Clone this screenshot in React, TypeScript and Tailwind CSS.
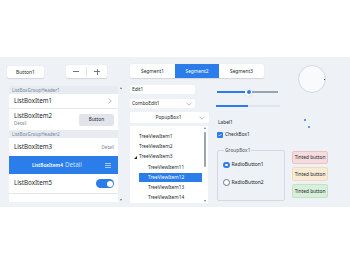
import React from "react";

const blue = "bg-[#2b7de9]";

function Chevron({ className = "" }: { className?: string }) {
  return (
    <svg width="6" height="4" viewBox="0 0 6 4" className={className}>
      <path d="M0.5 0.8 L3 3.2 L5.5 0.8" fill="none" stroke="#9aa4b1" strokeWidth="0.7" />
    </svg>
  );
}

function ListBox() {
  return (
    <div className="ml-[2px] mt-[8px] flex h-[116px] w-[115px] overflow-hidden">
      <div className="flex w-[109px] flex-col bg-white">
        <div className="flex h-[8px] items-center bg-[#e8ecf1] pl-[3px] text-[4.6px] text-[#6f86a3]">ListBoxGroupHeader1</div>
        <div className="flex h-[15px] items-center justify-between border-b border-[#e3e7ec] pl-[5px] pr-[6px] text-[6.2px] text-[#22272e]">
          <span>ListBoxItem1</span>
          <svg width="4" height="6" viewBox="0 0 4 6">
            <path d="M0.8 0.5 L3.2 3 L0.8 5.5" fill="none" stroke="#8b95a3" strokeWidth="0.7" />
          </svg>
        </div>
        <div className="flex h-[21px] items-center justify-between pl-[5px] pr-[4px]">
          <div className="flex flex-col leading-none">
            <span className="text-[6.2px] text-[#22272e]">ListBoxItem2</span>
            <span className="mt-[2px] text-[4.6px] text-[#7c8796]">Detail</span>
          </div>
          <div className="flex h-[12px] w-[35px] items-center justify-center rounded-[2px] bg-[#e1e5eb] text-[4.8px] text-[#22272e]">Button</div>
        </div>
        <div className="flex h-[8px] items-center bg-[#e8ecf1] pl-[3px] text-[4.6px] text-[#6f86a3]">ListBoxGroupHeader2</div>
        <div className="flex h-[18px] items-center justify-between pl-[5px] pr-[4px]">
          <span className="text-[6.2px] text-[#22272e]">ListBoxItem3</span>
          <span className="text-[4.6px] text-[#7c8796]">Detail</span>
        </div>
        <div className={`flex h-[18px] items-center ${blue} pl-[23px] pr-[4px]`}>
          <span className="text-[4.8px] font-semibold text-white">ListBoxItem4</span>
          <span className="ml-[2px] text-[6.2px] text-[#cfe2fb]">Detail</span>
          <svg width="6" height="5" viewBox="0 0 6 5" className="ml-auto mr-[3px]">
            <path d="M0 0.5 H6 M0 2.5 H6 M0 4.5 H6" stroke="white" strokeWidth="0.6" />
          </svg>
        </div>
        <div className="flex h-[20px] items-center justify-between border-b border-[#e3e7ec] pl-[5px] pr-[4px]">
          <span className="text-[6.2px] text-[#22272e]">ListBoxItem5</span>
          <div className={`flex h-[9px] w-[18px] items-center justify-end rounded-full ${blue} pr-[1.5px]`}>
            <div className="h-[6px] w-[6px] rounded-full bg-white" />
          </div>
        </div>
        <div className="h-[8px] bg-white" />
      </div>
      <div className="flex w-[6px] flex-col items-center justify-between bg-[#eef1f5] py-[1px]">
        <div className="h-0 w-0 border-x-[1.5px] border-b-[2px] border-x-transparent border-b-[#6e7885]" />
        <div className="h-0 w-0 border-x-[1.5px] border-t-[2px] border-x-transparent border-t-[#6e7885]" />
      </div>
    </div>
  );
}

function Tree() {
  const items: [string, number, boolean?][] = [
    ["TreeViewItem1", 9],
    ["TreeViewItem2", 9],
    ["TreeViewItem3", 9],
    ["TreeViewItem11", 18],
    ["TreeViewItem12", 18, true],
    ["TreeViewItem13", 18],
    ["TreeViewItem14", 18],
  ];
  return (
    <div className="mt-[3px] flex h-[77px] w-[78px] overflow-hidden rounded-[1px] bg-white">
      <div className="flex flex-1 flex-col pt-[5px]">
        {items.map(([t, ind, sel], i) => (
          <div key={t} className="relative flex h-[10.5px] items-center" style={{ paddingLeft: ind }}>
            {i === 2 && (
              <svg width="3" height="3" viewBox="0 0 3 3" className="absolute left-[4px] top-[4px]">
                <path d="M3 0 V3 H0 Z" fill="#222" />
              </svg>
            )}
            {sel ? (
              <div className={`-ml-[9px] flex h-[9.5px] w-[63px] items-center ${blue} pl-[9px] text-[4.8px] text-white`}>{t}</div>
            ) : (
              <span className="text-[4.8px] text-[#22272e]">{t}</span>
            )}
          </div>
        ))}
      </div>
      <div className="flex w-[6px] flex-col items-center justify-between py-[1px]">
        <div className="h-0 w-0 border-x-[1.5px] border-b-[2px] border-x-transparent border-b-[#6e7885]" />
        <div className="mb-auto mt-[3px] h-[35px] w-[1.5px] rounded bg-[#9aa3ae]" />
        <div className="h-0 w-0 border-x-[1.5px] border-t-[2px] border-x-transparent border-t-[#6e7885]" />
      </div>
    </div>
  );
}

export default function App() {
  return (
    <div className="h-[265px] w-[350px] bg-white font-['Noto_Sans',sans-serif] leading-none">
      <div className="h-[57px]" />
      <div className="flex h-[150px] gap-x-[6px] bg-[#eef1f5] pl-[7px] pt-[7px]">
        {/* column 1 */}
        <div className="flex w-[117px] flex-col">
          <div className="flex h-[14px] items-start">
            <div className="mt-[2px] flex h-[12px] w-[37px] items-center justify-center rounded-[2px] bg-white text-[5px] text-[#22272e] shadow-[0_0.5px_1px_rgba(0,0,0,0.12)]">Button1</div>
            <div className="ml-[22px] mt-[1px] flex h-[13px] w-[41px] items-center rounded-[2px] bg-white shadow-[0_0.5px_1px_rgba(0,0,0,0.12)]">
              <div className="flex flex-1 items-center justify-center">
                <div className="h-[0.7px] w-[6px] bg-[#6e7885]" />
              </div>
              <div className="h-[10px] w-px bg-[#e3e7ec]" />
              <div className="relative flex flex-1 items-center justify-center">
                <div className="h-[0.7px] w-[6px] bg-[#6e7885]" />
                <div className="absolute h-[6px] w-[0.7px] bg-[#6e7885]" />
              </div>
            </div>
          </div>
          <ListBox />
        </div>

        {/* column 2 */}
        <div className="flex w-[80px] flex-col">
          <div className="flex h-[14px] w-[134px] shrink-0 overflow-hidden rounded-[2px] bg-white text-[4.8px] text-[#22272e] shadow-[0_0.5px_1px_rgba(0,0,0,0.12)]">
            <div className="flex w-[45px] items-center justify-center">Segment1</div>
            <div className={`flex w-[44px] items-center justify-center ${blue} text-white`}>Segment2</div>
            <div className="flex w-[45px] items-center justify-center">Segment3</div>
          </div>
          <div className="mt-[7px] flex h-[9px] w-[65px] items-center rounded-[2px] bg-white pl-[2px] text-[4.8px] text-[#22272e]">Edit1</div>
          <div className="mt-[5px] flex h-[9px] w-[65px] items-center justify-between rounded-[2px] bg-white pl-[2px] pr-[3px] text-[4.8px] text-[#22272e]">
            <span>ComboEdit1</span>
            <Chevron />
          </div>
          <div className="mt-[4px] flex h-[11px] w-[79px] items-center rounded-[2px] bg-white pr-[4px] text-[4.8px] text-[#22272e]">
            <span className="flex-1 pl-[8px] text-center">PopupBox1</span>
            <Chevron />
          </div>
          <Tree />
        </div>

        {/* column 3 */}
        <div className="flex w-[70px] flex-col">
          <div className="mt-[24px] flex h-[8px] w-[62px] items-center pl-[1px]">
            <div className={`h-[1.5px] w-[28px] ${blue}`} />
            <div className="flex h-[7px] w-[7px] shrink-0 items-center justify-center rounded-full bg-white shadow-[0_0_1px_rgba(0,0,0,0.3)]">
              <div className={`h-[4px] w-[4px] rounded-full ${blue}`} />
            </div>
            <div className="h-[1.5px] flex-1 bg-[#9aa4b1]" />
          </div>
          <div className="mt-[9px] h-[2px] w-[64px] bg-[#dfe5ec]">
            <div className={`h-full w-[32px] ${blue}`} />
          </div>
          <div className="ml-[2px] mt-[13px] text-[4.8px] text-[#22272e]">Label1</div>
          <div className="ml-[1px] mt-[7px] flex items-center">
            <div className={`flex h-[6px] w-[6px] items-center justify-center rounded-[1px] ${blue}`}>
              <svg width="4" height="4" viewBox="0 0 4 4">
                <path d="M0.6 2 L1.6 3 L3.4 0.9" fill="none" stroke="white" strokeWidth="0.7" />
              </svg>
            </div>
            <span className="ml-[2px] text-[4.8px] text-[#22272e]">CheckBox1</span>
          </div>
          <fieldset className="ml-[1px] mt-[10px] h-[53px] w-[68px] rounded-[2px] border border-[#d3d9e1] pl-[5px]">
            <legend className="ml-[1px] px-[1px] text-[4.8px] text-[#4d5663]">GroupBox1</legend>
            <div className="mt-[9px] flex items-center">
              <div className="h-[6.5px] w-[6.5px] rounded-full border-[2px] border-[#2b7de9] bg-white" />
              <span className="ml-[2px] text-[5px] text-[#22272e]">RadioButton1</span>
            </div>
            <div className="mt-[11px] flex items-center">
              <div className="h-[6.5px] w-[6.5px] rounded-full border-[0.6px] border-[#6e7885] bg-white" />
              <span className="ml-[2px] text-[5px] text-[#22272e]">RadioButton2</span>
            </div>
          </fieldset>
        </div>

        {/* column 4 */}
        <div className="flex flex-col">
          <div className="relative ml-[6px] mt-[1px] h-[28px] w-[28px] rounded-full border border-[#d3d9e1] bg-[#f9fafc]">
            <div className="absolute left-[24.5px] top-[12.5px] h-[1.5px] w-[1.5px] rounded-full bg-black" />
          </div>
          <div className={`ml-[12px] mt-[26px] h-[2px] w-[2px] rounded-full ${blue}`} />
          <div className={`ml-[16px] mt-[5px] h-[2px] w-[2px] rounded-full ${blue}`} />
          <div className="mt-[23px] flex h-[13px] w-[36px] items-center justify-center rounded-[2px] border border-[#e9c3c5] bg-[#f6dcdd] text-[4.8px] text-[#22272e]">Tinted button</div>
          <div className="mt-[3px] flex h-[14px] w-[36px] items-center justify-center rounded-[2px] border border-[#eedcbc] bg-[#f8ead3] text-[4.8px] text-[#22272e]">Tinted button</div>
          <div className="mt-[3px] flex h-[14px] w-[36px] items-center justify-center rounded-[2px] border border-[#c3e2c6] bg-[#d8efda] text-[4.8px] text-[#22272e]">Tinted button</div>
        </div>
      </div>
    </div>
  );
}
